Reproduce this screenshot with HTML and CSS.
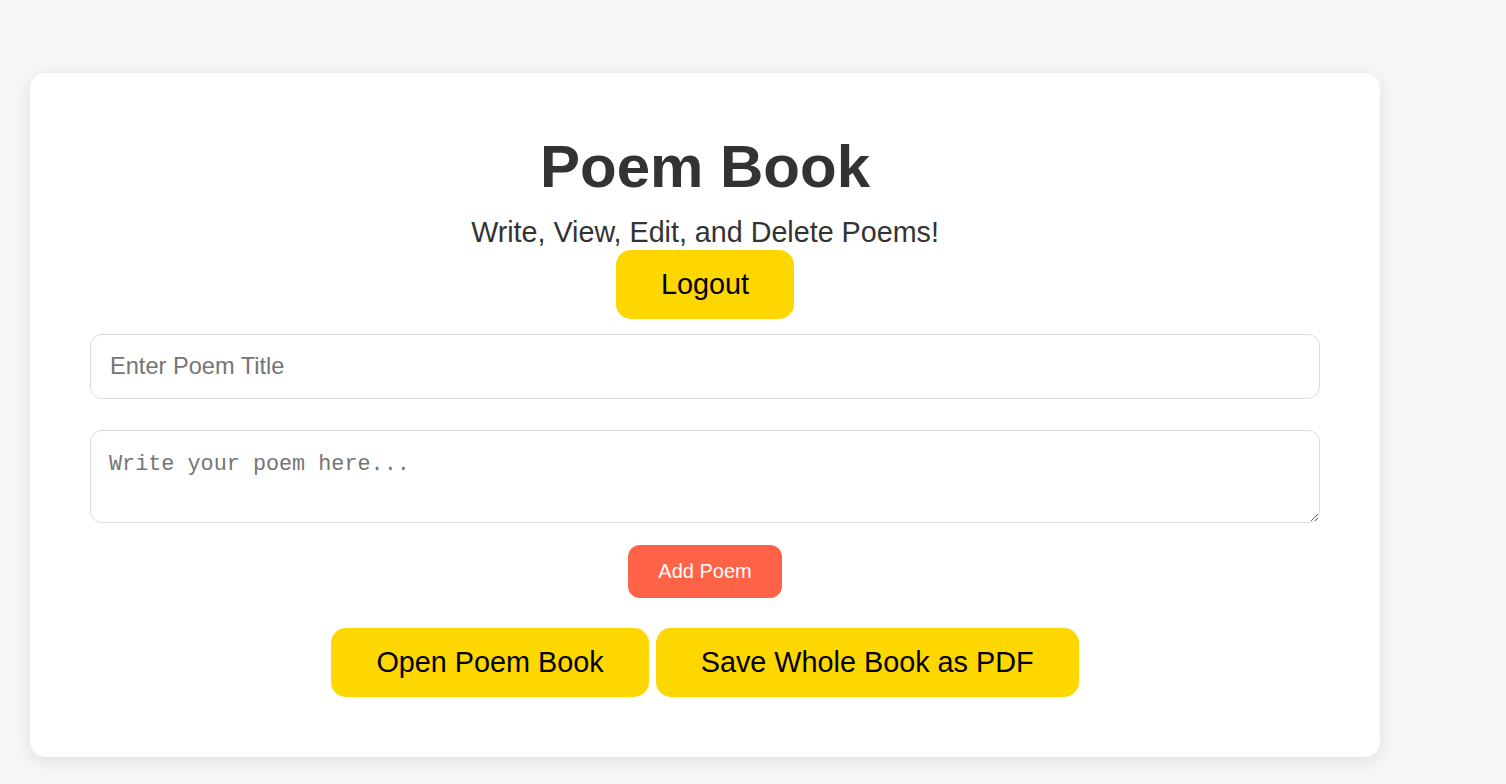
FILE: index.html
```html
<!DOCTYPE html>
<html lang="en">
<head>
<meta charset="utf-8">
<title>Poem Book</title>
<link rel="stylesheet" href="styles.css">
</head>
<body>
  <main class="card">
    <h1 class="title">Poem Book</h1>
    <p class="subtitle">Write, View, Edit, and Delete Poems!</p>
    <button class="btn-yellow logout">Logout</button>
    <input class="title-input" type="text" placeholder="Enter Poem Title">
    <textarea class="poem-input" placeholder="Write your poem here..."></textarea>
    <button class="btn-add">Add Poem</button>
    <div class="actions">
      <button class="btn-yellow">Open Poem Book</button>
      <button class="btn-yellow">Save Whole Book as PDF</button>
    </div>
  </main>
</body>
</html>
```

FILE: styles.css
```css
html, body {
  margin: 0;
  background: #f7f7f7;
  font-family: "Liberation Sans", Arial, sans-serif;
}

body {
  padding: 73px 30px 27px 30px;
}

.card {
  box-sizing: border-box;
  width: 1350px;
  background: #ffffff;
  border-radius: 15px;
  box-shadow: 0 4px 20px rgba(0, 0, 0, 0.1);
  padding: 59px 60px 60px 60px;
  display: flex;
  flex-direction: column;
  align-items: center;
}

.title {
  margin: 0;
  font-size: 60px;
  font-weight: bold;
  color: #333333;
  line-height: normal;
}

.subtitle {
  margin: 15px 0 0 0;
  font-size: 28.7px;
  color: #333333;
  line-height: 33px;
}

.btn-yellow {
  font-family: "Liberation Sans", Arial, sans-serif;
  font-size: 28.8px;
  line-height: 33px;
  padding: 18px 45px;
  background: #ffd700;
  color: #000000;
  border: none;
  border-radius: 15px;
  cursor: pointer;
}

.logout {
  margin-top: 1px;
}

.title-input {
  box-sizing: border-box;
  width: 100%;
  height: 65px;
  margin-top: 15px;
  padding: 0 19px;
  border: 1px solid #dddddd;
  border-radius: 12px;
  font-family: "Liberation Sans", Arial, sans-serif;
  font-size: 23.6px;
  color: #333333;
  outline: none;
}

.title-input::placeholder {
  color: #757575;
}

.poem-input {
  box-sizing: border-box;
  width: 100%;
  height: 93px;
  margin-top: 31px;
  padding: 21px 18px;
  border: 1px solid #dddddd;
  border-radius: 12px;
  font-family: "Liberation Mono", "DejaVu Sans Mono", monospace;
  font-size: 21.8px;
  color: #333333;
  outline: none;
}

.poem-input::placeholder {
  color: #757575;
}

.btn-add {
  margin-top: 22px;
  font-family: "Liberation Sans", Arial, sans-serif;
  font-size: 20px;
  line-height: 23px;
  padding: 15px 30px;
  background: #ff6347;
  color: #ffffff;
  border: none;
  border-radius: 12px;
  cursor: pointer;
}

.actions {
  margin-top: 30px;
  display: flex;
  justify-content: center;
  gap: 7px;
}
```
